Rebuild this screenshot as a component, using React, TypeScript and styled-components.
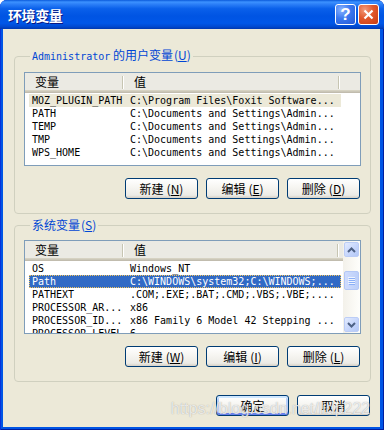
import React from "react";
import styled, { createGlobalStyle } from "styled-components";

const CJK = `"Noto Sans CJK SC", "Liberation Sans", sans-serif`;
const MONO = `"DejaVu Sans Mono", "Noto Sans CJK SC", monospace`;

const GlobalStyle = createGlobalStyle`
  html, body {
    margin: 0;
    padding: 0;
    background: #ffffff;
  }
  body {
    font-family: ${CJK};
  }
`;

interface EnvVar {
  name: string;
  value: string;
  state?: "inactive" | "selected";
}

const userVars: EnvVar[] = [
  { name: "MOZ_PLUGIN_PATH", value: "C:\\Program Files\\Foxit Software...", state: "inactive" },
  { name: "PATH", value: "C:\\Documents and Settings\\Admin..." },
  { name: "TEMP", value: "C:\\Documents and Settings\\Admin..." },
  { name: "TMP", value: "C:\\Documents and Settings\\Admin..." },
  { name: "WPS_HOME", value: "C:\\Documents and Settings\\Admin..." },
];

const systemVars: EnvVar[] = [
  { name: "OS", value: "Windows_NT" },
  { name: "Path", value: "C:\\WINDOWS\\system32;C:\\WINDOWS;...", state: "selected" },
  { name: "PATHEXT", value: ".COM;.EXE;.BAT;.CMD;.VBS;.VBE;...." },
  { name: "PROCESSOR_AR...", value: "x86" },
  { name: "PROCESSOR_ID...", value: "x86 Family 6 Model 42 Stepping ..." },
  { name: "PROCESSOR_LEVEL", value: "6" },
];

const Window = styled.div`
  position: relative;
  width: 384px;
  height: 430px;
  display: flex;
  flex-direction: column;
  background: #0055e5;
  border-radius: 7px 7px 0 0;
  box-shadow: inset 1px 0 #0831d9, inset -1px 0 #001ea0, inset 0 -1px #001ea0;
  overflow: hidden;
`;

const TitleBar = styled.div`
  flex: none;
  height: 29px;
  display: flex;
  align-items: center;
  gap: 2px;
  padding: 0 5px 0 8px;
  background: linear-gradient(
    180deg,
    #0a5adb 0%,
    #3c92ff 7%,
    #2d80f8 14%,
    #0a60ea 30%,
    #0054e3 55%,
    #0057e8 80%,
    #0049d0 92%,
    #0038af 100%
  );
`;

const Title = styled.div`
  flex: 1;
  color: #ffffff;
  font: bold 14px ${CJK};
  letter-spacing: -0.4px;
  text-shadow: 1px 1px #0a1883;
`;

const CaptionButton = styled.div<{ $variant: "help" | "close" }>`
  width: 21px;
  height: 21px;
  box-sizing: border-box;
  display: flex;
  align-items: center;
  justify-content: center;
  border: 1px solid #ffffff;
  border-radius: 3px;
  color: #ffffff;
  font: bold 17px "Liberation Sans", sans-serif;
  background: ${(p) =>
    p.$variant === "close"
      ? "radial-gradient(circle at 30% 25%, #f29a7a 0%, #e1582c 45%, #c83c12 100%)"
      : "radial-gradient(circle at 30% 25%, #8bb4ff 0%, #3b78ef 45%, #2458d6 100%)"};
`;

const Body = styled.div`
  flex: 1;
  margin: 0 4px 3px 3px;
  padding: 19px 9px 0 11px;
  display: flex;
  flex-direction: column;
  background: #ece9d8;
`;

const Group = styled.fieldset<{ $gap?: number }>`
  margin: ${(p) => p.$gap ?? 0}px 0 0;
  padding: 8px 9px 14px 9px;
  min-width: 0;
  border: 1px solid #d0d0bf;
  border-radius: 4px;
`;

const Legend = styled.legend`
  margin-left: 6px;
  padding: 0 2px;
  color: #0046d5;
  font: 12px/14px ${CJK};
`;

const LegendMono = styled.span`
  font: 10px/14px ${MONO};
`;

const Key = styled.span<{ $gap?: number }>`
  margin-left: ${(p) => p.$gap ?? 3}px;
  font-size: 12px;
`;

const ListBox = styled.div`
  height: 94px;
  box-sizing: border-box;
  display: flex;
  border: 1px solid #7f9db9;
  background: #ffffff;
  overflow: hidden;
`;

const ListMain = styled.div`
  flex: 1;
  min-width: 0;
  display: flex;
  flex-direction: column;
`;

const Header = styled.div`
  flex: none;
  height: 20px;
  box-sizing: border-box;
  display: flex;
  background: #ebeae3;
  border-bottom: 1px solid #c1bcae;
  box-shadow: inset 0 -1px #cbc7b8, inset 0 -2px #d6d2c2;
`;

const HeaderCell = styled.div<{ $w?: number }>`
  flex: ${(p) => (p.$w ? `0 0 ${p.$w}px` : "1")};
  padding-left: 10px;
  box-sizing: border-box;
  font: 12px/18px ${CJK};
  color: #000000;
  background: ${(p) =>
    p.$w
      ? `linear-gradient(#c7c5b2, #c7c5b2) right 1px top 3px / 1px 13px no-repeat,
         linear-gradient(#ffffff, #ffffff) right 0 top 3px / 1px 13px no-repeat`
      : "none"};
`;

const Rows = styled.div`
  flex: 1;
  padding: 1px 0 0 4px;
  overflow: hidden;
`;

const Row = styled.div<{ $state?: "inactive" | "selected" }>`
  display: flex;
  width: 312px;
  height: 13px;
  font: 10px/13px ${MONO};
  color: ${(p) => (p.$state === "selected" ? "#ffffff" : "#000000")};
  background: ${(p) =>
    p.$state === "selected" ? "#316ac5" : p.$state === "inactive" ? "#ece9d8" : "transparent"};
  outline: ${(p) => (p.$state === "selected" ? "1px dotted #f2c35a" : "none")};
  outline-offset: -1px;
`;

const Cell = styled.span<{ $w?: number; $pad: number }>`
  flex: ${(p) => (p.$w ? `0 0 ${p.$w}px` : "1")};
  box-sizing: border-box;
  padding-left: ${(p) => p.$pad}px;
  white-space: pre;
  overflow: hidden;
`;

const ScrollBar = styled.div`
  flex: 0 0 17px;
  display: flex;
  flex-direction: column;
  background: linear-gradient(to right, #f3f1ea, #fefefb);
`;

const ScrollButton = styled.div`
  flex: none;
  height: 15px;
  margin: 1px;
  box-sizing: border-box;
  display: flex;
  align-items: center;
  justify-content: center;
  border: 1px solid #bccdf6;
  border-radius: 2px;
  background: linear-gradient(135deg, #e3ebfe 0%, #c6d6fc 55%, #b4c8f6 100%);
`;

const Track = styled.div`
  flex: 1;
`;

const Thumb = styled.div`
  height: 19px;
  margin: 13px 1px 0;
  box-sizing: border-box;
  display: flex;
  align-items: center;
  justify-content: center;
  border: 1px solid #b4c8f6;
  border-radius: 2px;
  background: linear-gradient(to right, #cfdcfd, #bccff9);
`;

const ButtonRow = styled.div<{ $top: number }>`
  display: flex;
  justify-content: flex-end;
  gap: 8px;
  margin-top: ${(p) => p.$top}px;
  padding-right: 1px;
`;

const Button = styled.div<{ $default?: boolean }>`
  width: 73px;
  height: 21px;
  box-sizing: border-box;
  display: flex;
  align-items: center;
  justify-content: center;
  border: 1px solid #003c74;
  border-radius: 3px;
  font: 12px ${CJK};
  color: #000000;
  background: linear-gradient(180deg, #ffffff 0%, #f6f5f1 45%, #ecebe6 85%, #d6d0c5 100%);
  box-shadow: ${(p) =>
    p.$default
      ? "inset 0 2px #cee7ff, inset 0 -2px #6982ee, inset 2px 0 #b9d1fa, inset -2px 0 #b9d1fa"
      : "none"};
`;

const Watermark = styled.div`
  position: absolute;
  left: 171px;
  top: 400px;
  font: 16px "Liberation Sans", sans-serif;
  color: rgba(255, 255, 255, 0.75);
  text-shadow: 0 0 1px rgba(90, 90, 90, 0.55);
  pointer-events: none;
`;

const Chevron: React.FC<{ up?: boolean }> = ({ up }) => (
  <svg width="9" height="6" viewBox="0 0 9 6">
    <path
      d={up ? "M1 5 L4.5 1.5 L8 5" : "M1 1 L4.5 4.5 L8 1"}
      fill="none"
      stroke="#4d6185"
      strokeWidth="2"
    />
  </svg>
);

const Grip: React.FC = () => (
  <svg width="7" height="8" viewBox="0 0 7 8">
    {[0, 2, 4, 6].map((y) => (
      <g key={y}>
        <line x1="0" y1={y + 0.5} x2="7" y2={y + 0.5} stroke="#eef4fe" />
        <line x1="1" y1={y + 1.5} x2="7" y2={y + 1.5} stroke="#8cb0f8" />
      </g>
    ))}
  </svg>
);

const VarList: React.FC<{ items: EnvVar[]; scroll?: boolean }> = ({ items, scroll }) => (
  <ListBox>
    <ListMain>
      <Header>
        <HeaderCell $w={99}>变量</HeaderCell>
        <HeaderCell $w={scroll ? 215 : 216}>值</HeaderCell>
        <HeaderCell />
      </Header>
      <Rows>
        {items.map((item) => (
          <Row key={item.name} $state={item.state}>
            <Cell $w={95} $pad={3}>
              {item.name}
            </Cell>
            <Cell $pad={6}>{item.value}</Cell>
          </Row>
        ))}
      </Rows>
    </ListMain>
    {scroll && (
      <ScrollBar>
        <ScrollButton>
          <Chevron up />
        </ScrollButton>
        <Track>
          <Thumb>
            <Grip />
          </Thumb>
        </Track>
        <ScrollButton>
          <Chevron />
        </ScrollButton>
      </ScrollBar>
    )}
  </ListBox>
);

const Actions: React.FC<{ keys: [string, string, string] }> = ({ keys }) => (
  <ButtonRow $top={12}>
    <Button>
      新建<Key>(<u>{keys[0]}</u>)</Key>
    </Button>
    <Button>
      编辑<Key>(<u>{keys[1]}</u>)</Key>
    </Button>
    <Button>
      删除<Key>(<u>{keys[2]}</u>)</Key>
    </Button>
  </ButtonRow>
);

export default function App() {
  return (
    <>
      <GlobalStyle />
      <Window>
        <TitleBar>
          <Title>环境变量</Title>
          <CaptionButton $variant="help">?</CaptionButton>
          <CaptionButton $variant="close">
            <svg width="11" height="11" viewBox="0 0 11 11">
              <path d="M1.5 1.5 L9.5 9.5 M9.5 1.5 L1.5 9.5" stroke="#ffffff" strokeWidth="2.2" />
            </svg>
          </CaptionButton>
        </TitleBar>

        <Body>
          <Group>
            <Legend>
              <LegendMono>Administrator</LegendMono> 的用户变量
              <Key $gap={1}>
                (<u>U</u>)
              </Key>
            </Legend>
            <VarList items={userVars} />
            <Actions keys={["N", "E", "D"]} />
          </Group>

          <Group $gap={4}>
            <Legend>
              系统变量
              <Key $gap={1}>
                (<u>S</u>)
              </Key>
            </Legend>
            <VarList items={systemVars} scroll />
            <Actions keys={["W", "I", "L"]} />
          </Group>

          <ButtonRow $top={13}>
            <Button $default>确定</Button>
            <Button>取消</Button>
          </ButtonRow>
        </Body>

        <Watermark>https://blog.csdn.net/lidp222</Watermark>
      </Window>
    </>
  );
}
